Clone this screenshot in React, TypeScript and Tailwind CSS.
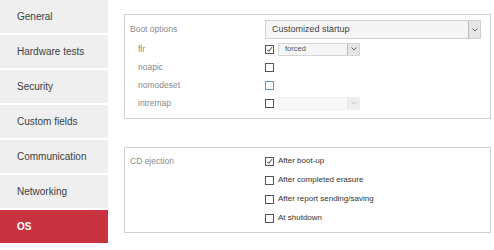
import React from "react";

const font = { fontFamily: '"Liberation Sans", Arial, sans-serif' };

const menu = [
  "General",
  "Hardware tests",
  "Security",
  "Custom fields",
  "Communication",
  "Networking",
  "OS",
];

const Check: React.FC<{ checked?: boolean; focus?: boolean }> = ({
  checked,
  focus,
}) => (
  <span
    className={
      "flex h-[9px] w-[9px] shrink-0 items-center justify-center border bg-white " +
      (focus ? "border-[#5b9bd5]" : "border-[#555]")
    }
  >
    {checked && (
      <svg width="7" height="7" viewBox="0 0 7 7">
        <path d="M1 3.5 L2.8 5.3 L6 1.2" fill="none" stroke="#333" strokeWidth="1" />
      </svg>
    )}
  </span>
);

const Arrow: React.FC<{ light?: boolean }> = ({ light }) => (
  <span
    className={
      "flex h-full w-[12px] items-center justify-center border-l " +
      (light ? "border-[#e3e3e3] bg-[#eeeeee]" : "border-[#bbb] bg-[#e6e6e6]")
    }
  >
    <svg width="6" height="4" viewBox="0 0 6 4">
      <path
        d="M0.5 0.5 L3 3 L5.5 0.5"
        fill="none"
        stroke={light ? "#c8c8c8" : "#666"}
        strokeWidth="1"
      />
    </svg>
  </span>
);

export default function App() {
  return (
    <div className="flex h-[250px] w-[494px] bg-white" style={font}>
      {/* sidebar */}
      <div className="flex w-[108px] flex-col gap-[2px]">
        {menu.map((m) => (
          <div
            key={m}
            className={
              "flex h-[33px] items-center pl-[17px] text-[10px] " +
              (m === "OS"
                ? "bg-[#c93341] font-bold text-white"
                : "bg-[#efefef] text-[#3a3f44]")
            }
          >
            {m}
          </div>
        ))}
      </div>

      {/* content */}
      <div className="flex flex-1 flex-col pl-[16px] pr-[3px] pt-[14px]">
        <div className="flex h-[105px] flex-col border border-[#cfcfcf] pl-[5px] pr-[9px] pt-[5px] text-[8.5px] text-[#8a8a8a]">
          <div className="flex h-[19px] items-center">
            <span className="w-[135px]">Boot options</span>
            <div className="flex h-[19px] flex-1 items-center justify-between border border-[#d0d0d0] bg-[#f5f5f5] pl-[6px] text-[9px] text-[#444]">
              <span>Customized startup</span>
              <Arrow />
            </div>
          </div>
          <div className="mt-[1px] flex h-[18px] items-center">
            <span className="w-[135px] pl-[8px]">flr</span>
            <Check checked />
            <div className="ml-[4px] flex h-[13px] w-[82px] items-center justify-between border border-[#d6d6d6] bg-[#f5f5f5] pl-[6px] text-[7.5px] text-[#555]">
              <span>forced</span>
              <Arrow />
            </div>
          </div>
          <div className="flex h-[18px] items-center">
            <span className="w-[135px] pl-[8px]">noapic</span>
            <Check />
          </div>
          <div className="flex h-[18px] items-center">
            <span className="w-[135px] pl-[8px]">nomodeset</span>
            <Check focus />
          </div>
          <div className="flex h-[18px] items-center">
            <span className="w-[135px] pl-[8px]">intremap</span>
            <Check />
            <div className="ml-[4px] flex h-[13px] w-[82px] items-center justify-end border border-[#eeeeee] bg-[#f8f8f8]">
              <Arrow light />
            </div>
          </div>
        </div>

        <div className="mt-[28px] flex h-[86px] border border-[#cfcfcf] pl-[5px] pt-[7px] text-[8.5px]">
          <span className="w-[135px] text-[#8a8a8a]">CD ejection</span>
          <div className="flex flex-col gap-[7px] text-[8px] text-[#333]">
            {[
              ["After boot-up", true],
              ["After completed erasure", false],
              ["After report sending/saving", false],
              ["At shutdown", false],
            ].map(([t, c]) => (
              <div key={t as string} className="flex h-[12px] items-center gap-[4px]">
                <Check checked={c as boolean} />
                <span>{t as string}</span>
              </div>
            ))}
          </div>
        </div>
      </div>
    </div>
  );
}
